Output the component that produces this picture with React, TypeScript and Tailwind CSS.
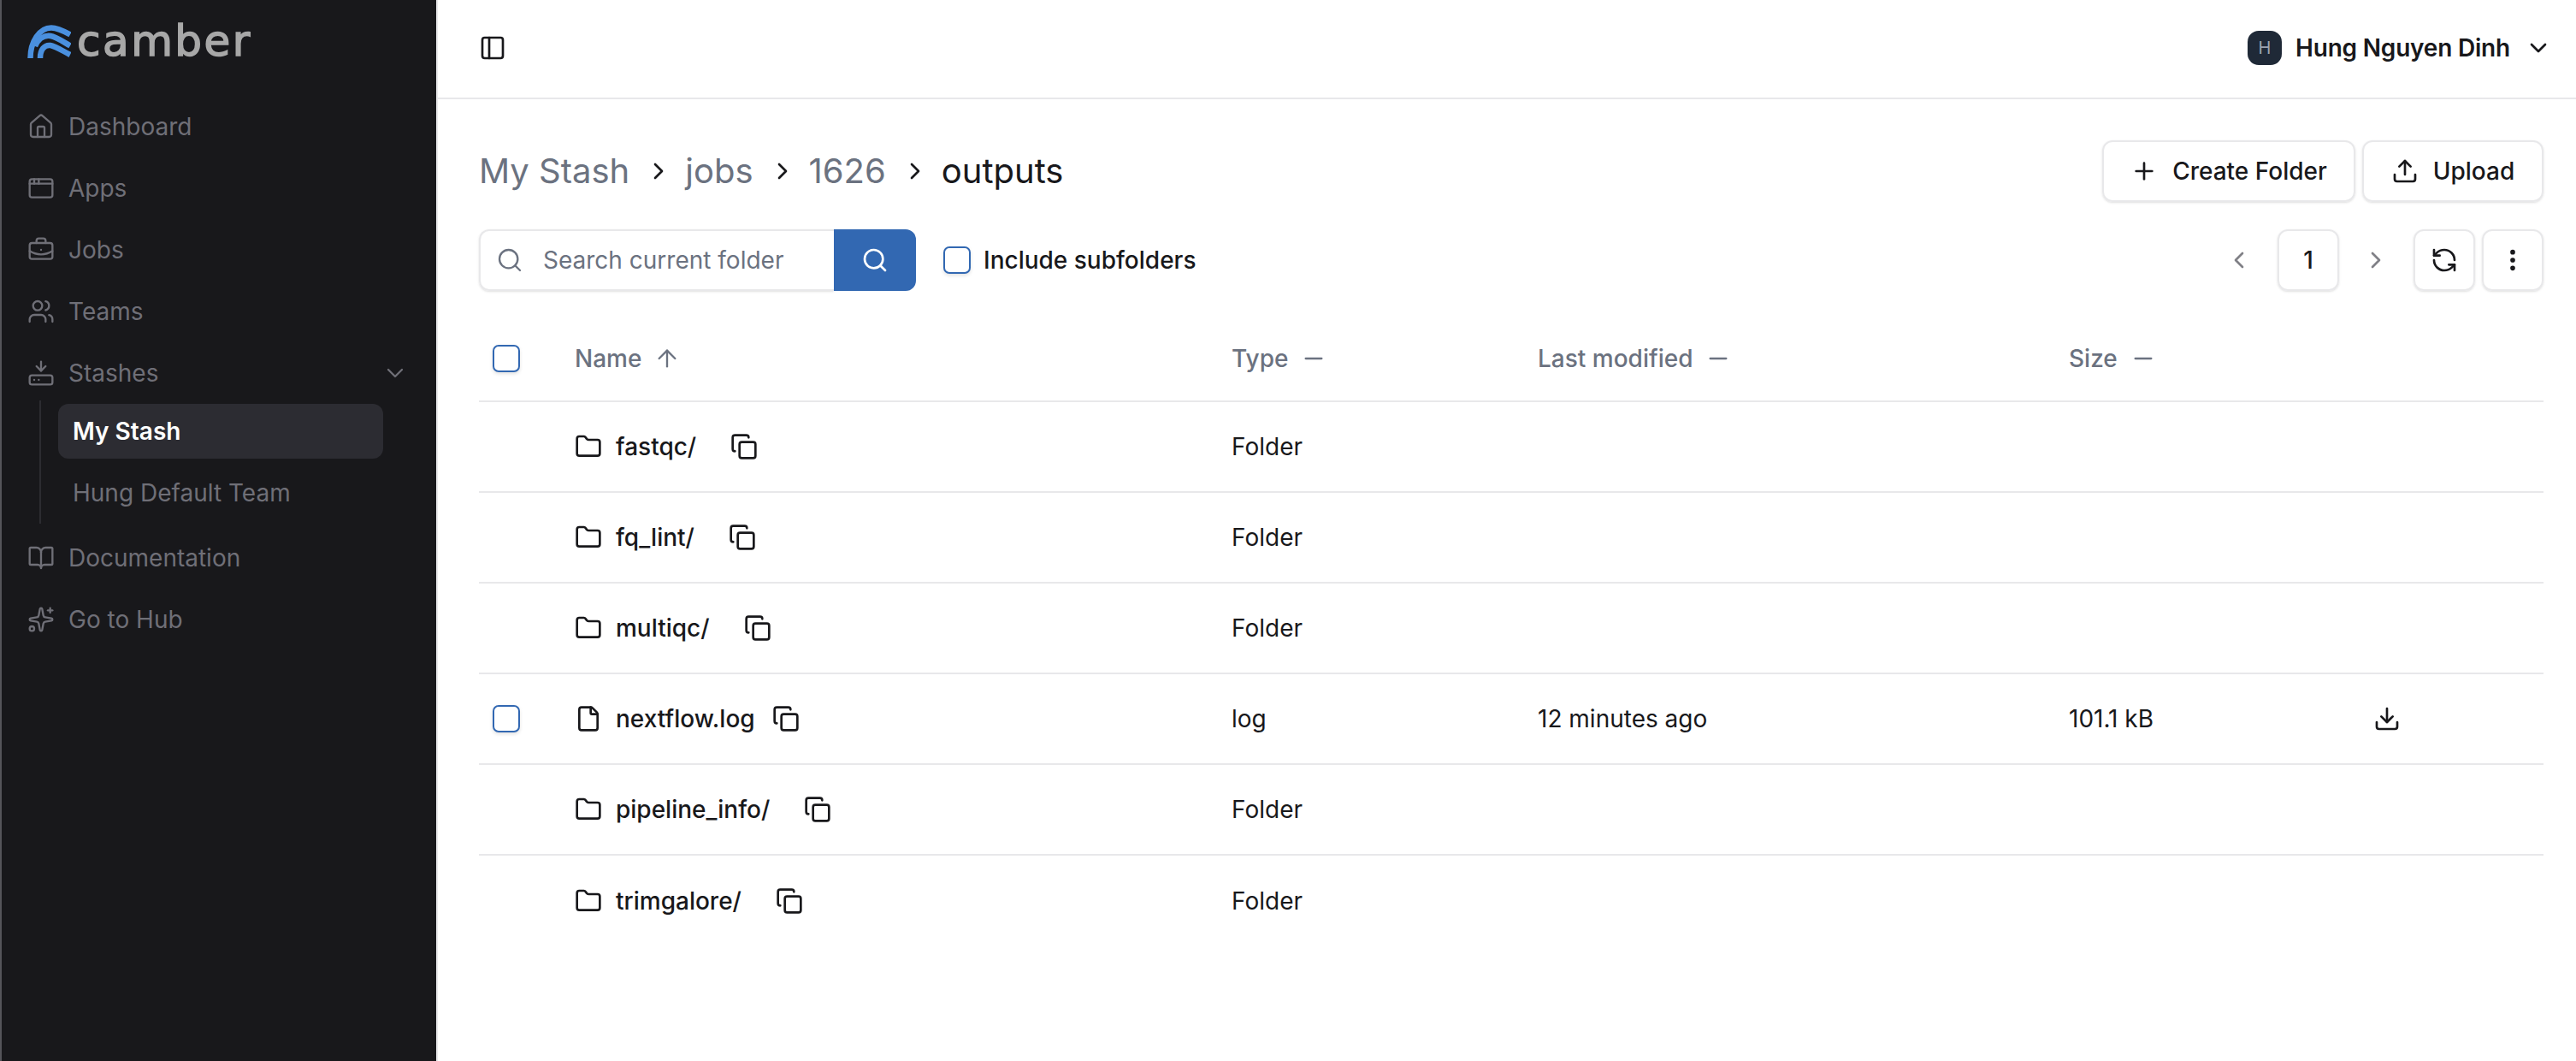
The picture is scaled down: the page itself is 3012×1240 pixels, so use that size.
import {
  AppWindow,
  ArrowUp,
  BookOpen,
  BriefcaseBusiness,
  ChevronDown,
  ChevronLeft,
  ChevronRight,
  Copy,
  Download,
  EllipsisVertical,
  File,
  Folder,
  HardDriveDownload,
  House,
  Minus,
  PanelLeft,
  Plus,
  RefreshCcw,
  Search,
  Sparkles,
  Upload,
  Users,
} from "lucide-react";

const NAV_TOP = [
  { label: "Dashboard", icon: House },
  { label: "Apps", icon: AppWindow },
  { label: "Jobs", icon: BriefcaseBusiness },
  { label: "Teams", icon: Users },
];

const NAV_BOTTOM = [
  { label: "Documentation", icon: BookOpen },
  { label: "Go to Hub", icon: Sparkles },
];

const ROWS = [
  { name: "fastqc/", type: "Folder" },
  { name: "fq_lint/", type: "Folder" },
  { name: "multiqc/", type: "Folder" },
  { name: "nextflow.log", type: "log", modified: "12 minutes ago", size: "101.1 kB" },
  { name: "pipeline_info/", type: "Folder" },
  { name: "trimgalore/", type: "Folder" },
];

function NavItem({ label, icon: Icon }: { label: string; icon: typeof House }) {
  return (
    <div className="flex h-[72px] items-center gap-[16px] pl-[30px] text-[#6f6f77]">
      <Icon size={32} strokeWidth={1.75} />
      <span>{label}</span>
    </div>
  );
}

function Checkbox() {
  return (
    <span className="block h-[32px] w-[32px] rounded-[7px] border-2 border-[#3268b2] bg-white shadow-[0_2px_4px_rgba(0,0,0,0.12)]" />
  );
}

function ColumnHead({ label, sorted }: { label: string; sorted?: boolean }) {
  return (
    <span className="flex items-center gap-[14px] text-[#6b7280]">
      {label}
      {sorted ? <ArrowUp size={32} strokeWidth={1.75} /> : <Minus size={32} strokeWidth={1.75} />}
    </span>
  );
}

function Crumb({ label }: { label: string }) {
  return (
    <>
      <span className="text-[#6b7280]">{label}</span>
      <ChevronRight size={32} strokeWidth={2} className="mr-[15px] ml-[18px] text-[#18181b]" />
    </>
  );
}

export default function App() {
  return (
    <div className="flex h-[1240px] w-[3012px] overflow-hidden bg-white font-['Inter',sans-serif] text-[28px] text-[#18181b]">
      <aside className="h-full w-[512px] shrink-0 border-r-2 border-l-2 border-r-[#e8e8ea] border-l-[#55555a] bg-[#18181b]">
        <div className="flex h-[112px] items-center pl-[30px]">
          <svg width="51" height="40" viewBox="0 0 51 40" fill="none" className="mt-[-15px]">
            <path d="M3.5 39C3.5 20 14 3.5 28 3.5C35 3.5 42 7 50 11.5" stroke="#4a90df" strokeWidth="6.5" />
            <path d="M9 25C13 16 20 12 27 13C34 14 42 20 50 24.5" stroke="#4a90df" strokeWidth="6.5" />
            <path d="M15 39C15 29 20 23 27 24C33 25 42 31 50 35" stroke="#4a90df" strokeWidth="6.5" />
          </svg>
          <span className="mt-[-16px] ml-[7px] font-['DejaVu_Sans',sans-serif] text-[50px] leading-none tracking-[2.5px] text-[#a8a8a8] [-webkit-text-stroke:1.5px_#a8a8a8]">camber</span>
        </div>
        {NAV_TOP.map((item) => (
          <NavItem key={item.label} {...item} />
        ))}
        <div className="flex h-[72px] items-center gap-[16px] pl-[30px] text-[#6f6f77]">
          <HardDriveDownload size={32} strokeWidth={1.75} />
          <span>Stashes</span>
          <ChevronDown size={32} strokeWidth={1.75} className="mr-[32px] ml-auto" />
        </div>
        <div className="mt-[-4px] mb-[4px] ml-[44px] w-[402px] border-l-2 border-[#2c2c31] pt-[4px] pl-[20px]">
          <div className="flex h-[64px] items-center rounded-[12px] bg-[#2c2c32] pl-[17px] font-semibold text-white">My Stash</div>
          <div className="mt-[4px] flex h-[72px] items-center pl-[17px] text-[#6f6f77]">Hung Default Team</div>
        </div>
        {NAV_BOTTOM.map((item) => (
          <NavItem key={item.label} {...item} />
        ))}
      </aside>

      <main className="min-w-0 flex-1">
        <header className="flex h-[116px] items-center border-b-2 border-[#e8e8ea] pr-[28px] pb-[2px] pl-[48px]">
          <PanelLeft size={32} strokeWidth={2} />
          <span className="ml-auto flex h-[40px] w-[40px] items-center justify-center rounded-[13px] bg-[#1f2937] text-[20px] text-[#9ca3af]">H</span>
          <span className="ml-[16px] font-semibold tracking-[-0.2px]">Hung Nguyen Dinh</span>
          <ChevronDown size={32} strokeWidth={2} className="ml-[17px]" />
        </header>

        <div className="pr-[38px] pl-[48px]">
          <div className="mt-[48px] flex items-center">
            <div className="flex items-center text-[40px]">
              <Crumb label="My Stash" />
              <Crumb label="jobs" />
              <Crumb label="1626" />
              <span>outputs</span>
            </div>
            <button className="ml-auto flex h-[72px] w-[296px] items-center justify-center gap-[17px] rounded-[12px] border-2 border-[#e8e8ea] font-medium shadow-sm">
              <Plus size={32} strokeWidth={2} />
              Create Folder
            </button>
            <button className="ml-[8px] flex h-[72px] w-[212px] items-center justify-center gap-[17px] rounded-[12px] border-2 border-[#e8e8ea] font-medium shadow-sm">
              <Upload size={32} strokeWidth={2} />
              Upload
            </button>
          </div>

          <div className="mt-[32px] flex items-center">
            <div className="flex h-[72px] w-[415px] items-center gap-[23px] rounded-l-[12px] border-2 border-r-0 border-[#e8e8ea] pl-[18px] text-[#6b7280] shadow-sm">
              <Search size={32} strokeWidth={1.75} />
              Search current folder
            </div>
            <div className="flex h-[72px] w-[96px] items-center justify-center rounded-r-[12px] bg-[#3268b2] text-white">
              <Search size={32} strokeWidth={2} />
            </div>
            <span className="ml-[32px]">
              <Checkbox />
            </span>
            <span className="ml-[15px] font-medium">Include subfolders</span>
            <ChevronLeft size={32} strokeWidth={2} className="ml-auto text-[#808086]" />
            <span className="ml-[29px] flex h-[72px] w-[72px] items-center justify-center rounded-[12px] border-2 border-[#e8e8ea] font-medium shadow-sm">1</span>
            <ChevronRight size={32} strokeWidth={2} className="ml-[27px] text-[#808086]" />
            <span className="ml-[28px] flex h-[72px] w-[72px] items-center justify-center rounded-[12px] border-2 border-[#e8e8ea] shadow-sm">
              <RefreshCcw size={32} strokeWidth={2} />
            </span>
            <span className="ml-[8px] flex h-[72px] w-[72px] items-center justify-center rounded-[12px] border-2 border-[#e8e8ea] shadow-sm">
              <EllipsisVertical size={32} strokeWidth={2.25} />
            </span>
          </div>

          <div className="mt-[30px]">
            <div className="grid h-[100px] grid-cols-[112px_768px_358px_621px_1fr] items-center border-b-2 border-[#e8e8ea] font-medium">
              <span className="pl-[16px]">
                <Checkbox />
              </span>
              <ColumnHead label="Name" sorted />
              <ColumnHead label="Type" />
              <ColumnHead label="Last modified" />
              <ColumnHead label="Size" />
            </div>
            {ROWS.map((row, i) => (
              <div
                key={row.name}
                className={`grid h-[106px] grid-cols-[112px_768px_358px_621px_356px_1fr] items-center ${i < ROWS.length - 1 ? "border-b-2 border-[#e8e8ea]" : ""}`}
              >
                <span className="pl-[16px]">{row.modified ? <Checkbox /> : null}</span>
                <span className="flex items-center font-medium">
                  {row.modified ? (
                    <File size={32} strokeWidth={2} className="mr-[16px]" />
                  ) : (
                    <Folder size={32} strokeWidth={2} className="mr-[16px]" />
                  )}
                  {row.name}
                  <Copy size={32} strokeWidth={2} className={row.modified ? "ml-[20px]" : "ml-[40px]"} />
                </span>
                <span>{row.type}</span>
                <span>{row.modified}</span>
                <span>{row.size}</span>
                <span>{row.modified ? <Download size={32} strokeWidth={2} /> : null}</span>
              </div>
            ))}
          </div>
        </div>
      </main>
    </div>
  );
}
